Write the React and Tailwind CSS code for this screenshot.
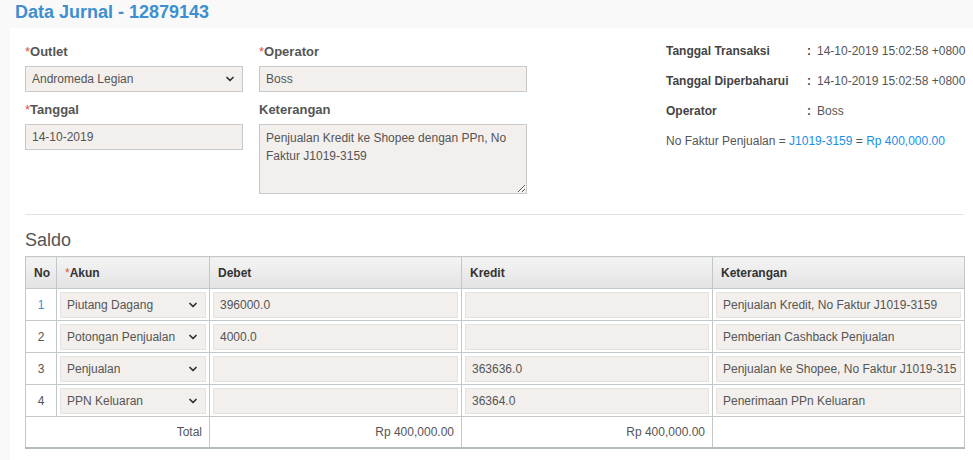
import { ChevronDown } from 'lucide-react';

const font = { fontFamily: '"Liberation Sans", Arial, sans-serif' };

function Label({ children, required }) {
  return (
    <div className="h-5 mb-1 text-[13px] leading-5 font-bold text-[#555]">
      {required && <span className="text-[#d9534f] font-normal">*</span>}
      {children}
    </div>
  );
}

function SelectBox({ value, className = '' }) {
  return (
    <div className={`flex items-center justify-between h-[26px] pl-[6px] pr-[6px] bg-[#f2efec] text-[12px] text-[#555] ${className}`}>
      <span className="truncate">{value}</span>
      <ChevronDown size={12} strokeWidth={3.5} className="text-[#333] shrink-0" />
    </div>
  );
}

function TextBox({ value, className = '' }) {
  return (
    <div className={`flex items-center h-[26px] pl-[6px] bg-[#f2efec] text-[12px] text-[#555] whitespace-nowrap overflow-hidden ${className}`}>
      {value}
    </div>
  );
}

const rows = [
  { no: '1', akun: 'Piutang Dagang', debet: '396000.0', kredit: '', ket: 'Penjualan Kredit, No Faktur J1019-3159', link: true },
  { no: '2', akun: 'Potongan Penjualan', debet: '4000.0', kredit: '', ket: 'Pemberian Cashback Penjualan' },
  { no: '3', akun: 'Penjualan', debet: '', kredit: '363636.0', ket: 'Penjualan ke Shopee, No Faktur J1019-315' },
  { no: '4', akun: 'PPN Keluaran', debet: '', kredit: '36364.0', ket: 'Penerimaan PPn Keluaran' },
];

const info = [
  ['Tanggal Transaksi', '14-10-2019 15:02:58 +0800'],
  ['Tanggal Diperbaharui', '14-10-2019 15:02:58 +0800'],
  ['Operator', 'Boss'],
];

export default function App() {
  const cellBox = 'border border-[#e4e1de]';
  const th = 'border border-[#c2c8ca] h-[32px] px-2 text-left text-[12px] font-bold text-[#333] bg-linear-to-b from-[#f4f4f4] to-[#e3e3e3]';
  const td = 'border border-[#c2c8ca] h-[32px] px-[3px] py-[2px]';
  const tot = 'border border-[#c2c8ca] border-b-2 border-b-[#b3babb] h-[31px] pr-[7px] text-right text-[#555]';

  return (
    <div className="min-h-[460px] bg-[#f9f9f9]" style={font}>
      {/* Title */}
      <div className="h-7 pl-[15px] text-[18px] leading-[24px] font-bold text-[#3d8fcf]">
        Data Jurnal - 12879143
      </div>

      <div className="ml-[10px] bg-white pl-[15px] pr-[9px] pt-[14px] pb-3">
        {/* Header form */}
        <div className="flex">
          <div className="w-[218px] shrink-0">
            <Label required>Outlet</Label>
            <SelectBox value="Andromeda Legian" className="border border-[#c9c9c9]" />
            <div className="mt-[8px]">
              <Label required>Tanggal</Label>
              <TextBox value="14-10-2019" className="border border-[#c9c9c9]" />
            </div>
          </div>

          <div className="w-[268px] ml-4 shrink-0">
            <Label required>Operator</Label>
            <TextBox value="Boss" className="border border-[#c9c9c9]" />
            <div className="mt-[8px]">
              <Label>Keterangan</Label>
              <textarea
                readOnly
                value={'Penjualan Kredit ke Shopee dengan PPn, No Faktur J1019-3159'}
                className="block w-full h-[70px] px-[6px] py-[4px] bg-[#f2efec] border border-[#c9c9c9] text-[12px] leading-[18px] text-[#555] outline-none resize-y"
                style={font}
              />
            </div>
          </div>

          <div className="ml-[139px] -mt-[6px] text-[12px] text-[#555] whitespace-nowrap">
            {info.map(([k, v]) => (
              <div key={k} className="flex h-[30px] items-center">
                <span className="w-[141px] shrink-0 font-bold text-[#444]">{k}</span>
                <span className="font-bold text-[#444] w-[10px] shrink-0">:</span>
                <span>{v}</span>
              </div>
            ))}
            <div className="flex h-[30px] items-center">
              No Faktur Penjualan =&nbsp;
              <span className="text-[#1a8ee6]">J1019-3159</span>
              &nbsp;=&nbsp;
              <span className="text-[#1a8ee6]">Rp 400,000.00</span>
            </div>
          </div>
        </div>

        <div className="mt-[20px] border-t border-[#e2e2e2]" />

        <div className="mt-[14px] h-[22px] text-[18px] leading-[22px] text-[#555]">Saldo</div>

        {/* Table */}
        <table className="mt-[5px] w-[939px] table-fixed border-collapse text-[12px]">
          <colgroup>
            <col className="w-[31px]" />
            <col className="w-[153px]" />
            <col className="w-[252px]" />
            <col className="w-[251px]" />
            <col className="w-[252px]" />
          </colgroup>
          <thead>
            <tr>
              <th className={th}>No</th>
              <th className={th}>
                <span className="text-[#d9534f] font-normal">*</span>Akun
              </th>
              <th className={th}>Debet</th>
              <th className={th}>Kredit</th>
              <th className={th}>Keterangan</th>
            </tr>
          </thead>
          <tbody>
            {rows.map((r) => (
              <tr key={r.no}>
                <td className={`border border-[#c2c8ca] h-[32px] text-center ${r.link ? 'text-[#3d8fcf]' : 'text-[#555]'}`}>{r.no}</td>
                <td className={td}>
                  <SelectBox value={r.akun} className={cellBox} />
                </td>
                <td className={td}>
                  <TextBox value={r.debet} className={cellBox} />
                </td>
                <td className={td}>
                  <TextBox value={r.kredit} className={cellBox} />
                </td>
                <td className={td}>
                  <TextBox value={r.ket} className={cellBox} />
                </td>
              </tr>
            ))}
            <tr>
              <td colSpan={2} className={tot}>Total</td>
              <td className={tot}>Rp 400,000.00</td>
              <td className={tot}>Rp 400,000.00</td>
              <td className={tot}></td>
            </tr>
          </tbody>
        </table>
      </div>
    </div>
  );
}
